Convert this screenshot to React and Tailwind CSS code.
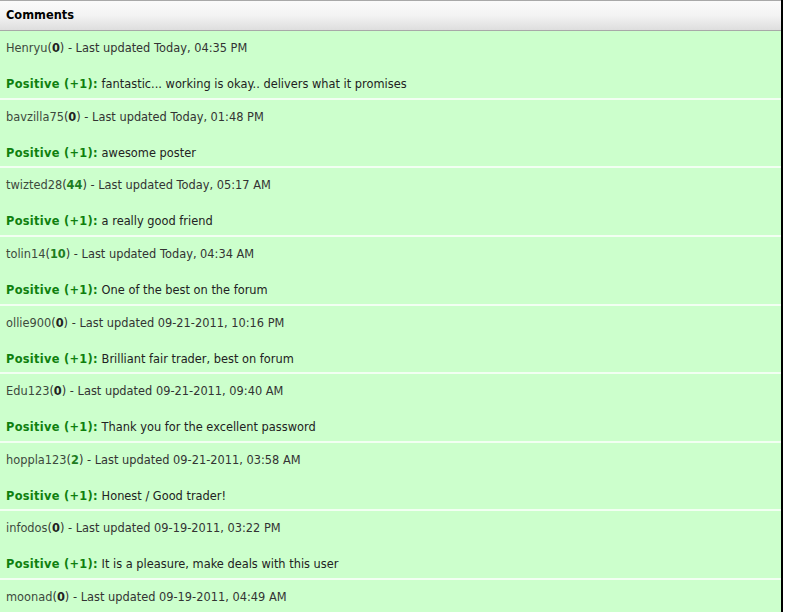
import React from 'react';

const comments = [
  { user: 'Henryu', score: '0', date: 'Today, 04:35 PM', text: 'fantastic... working is okay.. delivers what it promises' },
  { user: 'bavzilla75', score: '0', date: 'Today, 01:48 PM', text: 'awesome poster' },
  { user: 'twizted28', score: '44', date: 'Today, 05:17 AM', text: 'a really good friend' },
  { user: 'tolin14', score: '10', date: 'Today, 04:34 AM', text: 'One of the best on the forum' },
  { user: 'ollie900', score: '0', date: '09-21-2011, 10:16 PM', text: 'Brilliant fair trader, best on forum' },
  { user: 'Edu123', score: '0', date: '09-21-2011, 09:40 AM', text: 'Thank you for the excellent password' },
  { user: 'hoppla123', score: '2', date: '09-21-2011, 03:58 AM', text: 'Honest / Good trader!' },
  { user: 'infodos', score: '0', date: '09-19-2011, 03:22 PM', text: 'It is a pleasure, make deals with this user' },
  { user: 'moonad', score: '0', date: '09-19-2011, 04:49 AM', text: '' },
];

// Feedback row: who left it, then the rating line
const CommentRow = ({ c }) => (
  <div className="h-[68.625px] shrink-0 bg-[#ccffcc] border-b-2 border-[#f2fff2] px-[6px] pt-[9px]">
    <div className="leading-[16px] text-[#333]">
      <span className="text-[#3d4a3d]">{c.user}</span>(
      <span className={`font-bold ${c.score === '0' ? 'text-[#222]' : 'text-[#1e7d1e]'}`}>{c.score}</span>
      ) - Last updated {c.date}
    </div>
    {c.text && (
      <div className="leading-[16px] mt-[20px] text-[#222]">
        <span className="font-bold tracking-[0.3px] text-[#0f800f]">Positive (+1):</span> {c.text}
      </div>
    )}
  </div>
);

export default function App() {
  return (
    <div className="w-[788px] h-[612px] overflow-hidden bg-white" style={{ fontFamily: '"DejaVu Sans", sans-serif' }}>
      <div className="w-[783px] h-full flex flex-col border-r-2 border-black text-[11.4px]">
        <div className="h-[31px] shrink-0 flex items-center px-[6px] border-t border-b border-[#a8a8a8] bg-gradient-to-b from-[#fafafa] via-[#f3f3f3] to-[#dedede]">
          <span className="font-bold text-black text-[11.4px]">Comments</span>
        </div>
        {comments.map((c) => (
          <CommentRow key={c.user} c={c} />
        ))}
      </div>
    </div>
  );
}
